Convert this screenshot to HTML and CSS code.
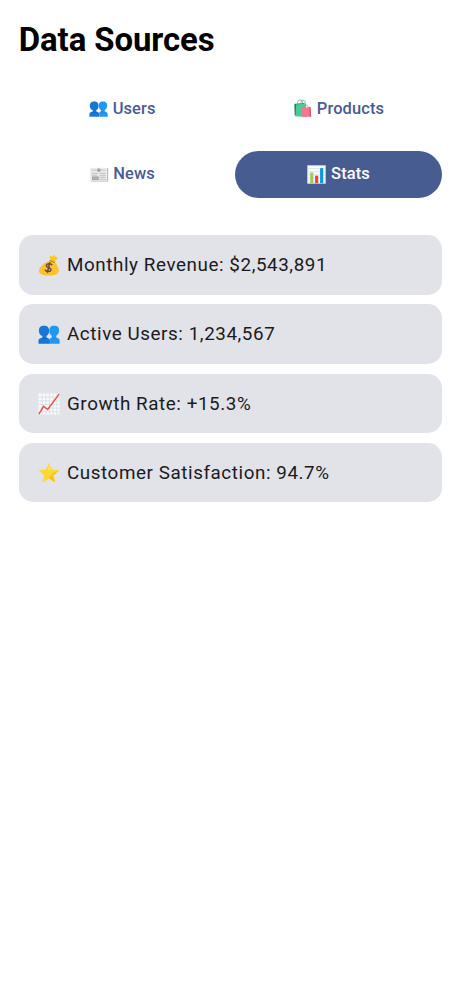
FILE: index.html
```html
<!DOCTYPE html>
<html lang="en">
<head>
<meta charset="utf-8">
<title>Data Sources</title>
<link rel="stylesheet" href="styles.css">
</head>
<body>
<svg class="defs" aria-hidden="true">
  <symbol id="people" viewBox="0 -1 24 24">
    <path fill="#1976d2" d="M7 2.500c3.200 0 4.600 2.200 4.500 5.200-.1 2.500-1 4.100-2.300 5.100v2c1.500.6 3.800 1 3.800 3.300v3.400H.5V18c0-2.200 2.700-2.600 4.300-3.200v-2C3.300 11.700 2.400 10 2.400 7.700 2.300 4.700 3.700 2.500 7 2.500z"/>
    <path fill="#1976d2" d="M6.500 2C2.500 2 1 4.200 1 7.200c0 2.800 1 4.500 2.800 5.600l6-.2c1.500-1 2.300-2.700 2.300-5.200C12.100 4.200 10.500 2 6.500 2z"/>
    <path fill="#2196f3" d="M17.700 2c-4 0-5.300 2.200-5.300 5.200 0 2.800.8 4.500 2.600 5.600v2c-.8.300-1.500.6-2 1v5.700h10.600V18c0-2.200-2.100-2.600-3.700-3.200v-2c1.800-1.100 3.100-2.800 3.100-5.600 0-3-1.300-5.200-5.300-5.200z"/>
    <path fill="#1565c0" d="m4.800 14.500 2.300 1.300 2.100-1.300v1L7.100 17l-2.300-1.500z"/>
    <path fill="#1e88e5" d="m15.500 14.500 2.200 1.300 2.100-1.300v1L17.700 17l-2.200-1.500z"/>
  </symbol>
  <symbol id="bags" viewBox="0 0 24 24">
    <path d="M6 8V4q0-3 3-3t3 3v4M10 7V3.500q0-2 2.500-2t3 2.500v3" fill="none" stroke="#79a99a" stroke-width="1"/>
    <path fill="#26a77b" d="m2 6 12-1 2 2v15L3 21z"/>
    <path fill="#4fc99c" d="m4 7 12-1 .7 16H3z"/>
    <path fill="#16805e" d="m2 6 2 1-1 14-1-1z"/>
    <path d="M14 12V9.500q0-2 2.500-2T19 9.500V12" fill="none" stroke="#a98d96"/>
    <path fill="#f7778e" d="m11 11 11-1 1 12-11 1z"/>
    <path fill="#d95370" d="m20.500 10 1.500 0 1 12-2 .3z"/>
  </symbol>
  <symbol id="news" viewBox="0 0 24 24">
    <path fill="#bdbdbd" d="M1 4h22v17H1z"/>
    <path fill="#ededed" d="M1 3.500h20.500V20H1z"/>
    <path d="M2 6.500h6m6 0h6M2 10.500h8m2 0h8M12 13h8m-8 2.500h8M12 18h8M2 13h7" stroke="#b5b5b5" stroke-width="1"/>
    <path d="M8.500 6.500h5M10 5h2.500v3H10z" stroke="#8d8d8d" fill="none"/>
    <path fill="#9e9e9e" d="M2.500 14.500H11V19H2.500z"/>
    <path d="m3.500 18 2-2 2 2 2-2" stroke="#ddd" fill="none"/>
  </symbol>
  <symbol id="bars" viewBox="0 0 24 24">
    <path fill="#fafafa" stroke="#d3d8da" stroke-width=".8" d="M.7.7h22.600v22.600H.7z"/>
    <path d="M1 4.500h22M1 8.500h22M1 12.500h22M1 16.500h22M1 20.500h22" stroke="#d5dde0" stroke-width=".9"/>
    <path fill="#9ccc65" d="M4 9.500h4V23H4z"/>
    <path fill="#f44336" d="M10.200 13.500h4V23h-4z"/>
    <path fill="#039be5" d="M16.500 4h4v19h-4z"/>
  </symbol>
  <symbol id="money" viewBox="0 0 24 24">
    <path fill="#f9c52b" d="M14.500 7.500C13 5 12 3.400 13.200 2.500c1-.7 1.600.6 2.600.2.8-.4 1-1.700 2-1.500 1 .2.600 1.500 1.400 2 .8.500 2-.2 2.300.8.3 1.200-1.600 2.200-3.800 4.500 3.300 3.300 5.500 7 5 10-.5 3.600-4.500 5-10.700 5C5.500 23.500 1 22 1 18.300c0-3.600 4.500-7.600 10-10.300z"/>
    <path fill="#fbc02d" d="M2 19c4 3 15 3 20-1-1 4-5 5-10 5-5.500 0-9-1-10-4z"/>
    <path d="m13.200 7.200 5 1.900" stroke="#c58b14" stroke-width="1.500" stroke-linecap="round"/>
    <path d="M15 11.700c-2-1.600-5.400-1.300-5.900.8-.6 2.400 5.500 2.200 5.100 4.800-.3 2.300-4.600 2.200-6.200.3M12.900 9.500 10.300 20" fill="none" stroke="#6d4c41" stroke-width="1.700" stroke-linecap="round"/>
  </symbol>
  <symbol id="growth" viewBox="0 0 24 24">
    <path fill="#fafafa" d="M.5.500h23v23H.5z"/>
    <path d="M.5 4.500h23M.5 8.500h23M.5 12.500h23M.5 16.500h23M.5 20.500h23M4.500.500v23M8.500.500v23M12.500.500v23M16.500.500v23M20.500.500v23" stroke="#cfdce0" stroke-width=".8"/>
    <path d="m1 23 5-8.500 4.500 3.500L23.200 1" fill="none" stroke="#e84b43" stroke-width="1.500"/>
  </symbol>
  <symbol id="star" viewBox="0 0 24 24">
    <path fill="#fdd835" d="m12 .7 3.200 7.600 8.300.7-6.300 5.400 1.900 8.300-7.100-4.400-7.100 4.400 1.900-8.300L.5 9l8.300-.7z"/>
    <path fill="#ffee72" d="m12.100 3 1.500 6-2.400-.2z"/>
    <path fill="#f4b400" d="m15.200 12.200 7.300-2.700-5.700 4.900zM15 13.300l3.400 8.500-6.400-4z" opacity=".65"/>
  </symbol>
</svg>
<main class="screen">
  <h1 class="title">Data Sources</h1>
  <nav class="tabs">
    <button class="tab"><svg class="tab-icon"><use href="#people"/></svg>Users</button>
    <button class="tab"><svg class="tab-icon"><use href="#bags"/></svg>Products</button>
    <button class="tab"><svg class="tab-icon"><use href="#news"/></svg>News</button>
    <button class="tab tab-active"><svg class="tab-icon"><use href="#bars"/></svg>Stats</button>
  </nav>
  <section class="cards">
    <div class="card"><svg class="card-icon"><use href="#money"/></svg>Monthly Revenue: $2,543,891</div>
    <div class="card"><svg class="card-icon"><use href="#people"/></svg>Active Users: 1,234,567</div>
    <div class="card"><svg class="card-icon"><use href="#growth"/></svg>Growth Rate: +15.3%</div>
    <div class="card"><svg class="card-icon"><use href="#star"/></svg>Customer Satisfaction: 94.7%</div>
  </section>
</main>
</body>
</html>
```
FILE: styles.css
```css
* { box-sizing: border-box; }
body {
  margin: 0;
  background: #fff;
  font-family: Roboto, "Liberation Sans", sans-serif;
}
.defs { display: none; }
.screen { padding: 20px 18.8px; min-height: 1000px; }
.title {
  margin: 0 0 25px;
  color: #000;
  font-size: 32.93px;
  line-height: 40px;
  font-weight: 700;
  letter-spacing: -0.1px;
}
.tabs {
  display: grid;
  grid-template-columns: 1fr 1fr;
  gap: 18.8px 9.4px;
  margin-bottom: 37.4px;
}
.tab {
  display: flex;
  align-items: center;
  justify-content: center;
  height: 47px;
  padding: 0;
  border: 0;
  border-radius: 23.5px;
  background: transparent;
  color: #475d92;
  font: 500 16.46px/24px Roboto, "Liberation Sans", sans-serif;
  letter-spacing: 0.12px;
}
.tab-active { background: #475d92; color: #fff; }
.tab-icon { width: 19px; height: 19px; margin-right: 4.6px; }
.cards { display: grid; gap: 9.6px; }
.card {
  display: flex;
  align-items: center;
  height: 59.6px;
  padding: 0.6px 19px 0;
  border-radius: 14.1px;
  background: #e2e2e9;
  color: #1a1b20;
  font-size: 18.82px;
  letter-spacing: 0.575px;
  white-space: pre;
}
.card-icon { width: 22px; height: 22px; margin-right: 7.2px; }
```
